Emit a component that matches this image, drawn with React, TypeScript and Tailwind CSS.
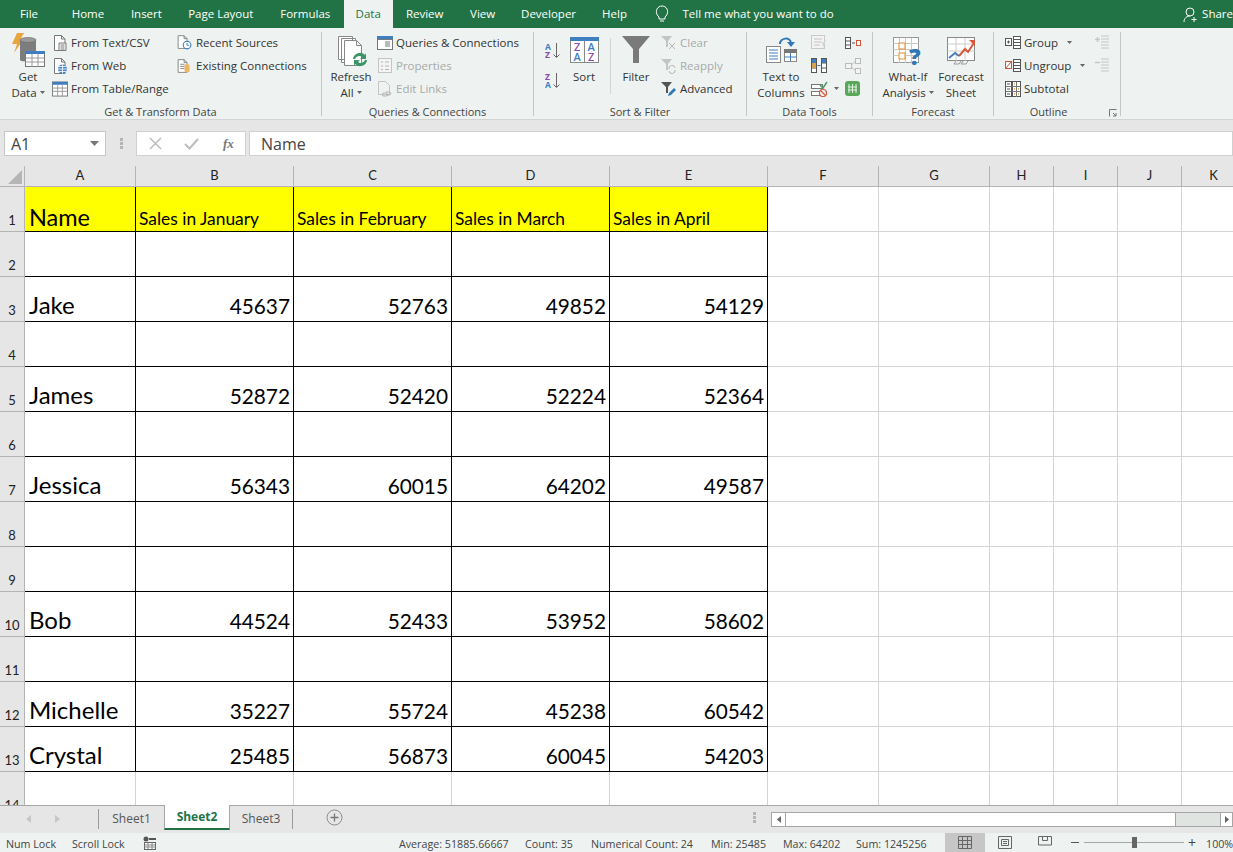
import React from "react";

const UI = "font-['Open_Sans','Noto_Sans',sans-serif]";
const CELL = "font-['Lato','Noto_Sans',sans-serif]";

const tabs = [
  { name: "File", w: "w-[58px]" },
  { name: "Home", w: "w-[60px]" },
  { name: "Insert", w: "w-[57px]" },
  { name: "Page Layout", w: "w-[92px]" },
  { name: "Formulas", w: "w-[77px]" },
  { name: "Data", w: "w-[49px]", active: true },
  { name: "Review", w: "w-[64px]" },
  { name: "View", w: "w-[52px]" },
  { name: "Developer", w: "w-[80px]" },
  { name: "Help", w: "w-[52px]" },
];

const Caret = () => (
  <svg width="5" height="3" viewBox="0 0 5 3" className="inline-block ml-[3px] mb-[2px]">
    <path d="M0 0h5L2.500 3z" fill="#666" />
  </svg>
);

const Doc = ({ c = "#777" }: { c?: string }) => (
  <path d="M2.500 .5h7l3.500 3.500v11.500h-10.500z M9.500 .5v3.500h3.500" fill="#fff" stroke={c} />
);

const FromText = () => (
  <svg width="16" height="16" viewBox="0 0 16 16">
    <Doc />
    <path d="M7 8h7v7.500h-7z" fill="#fff" stroke="#777" />
    <path d="M8.500 10h4M8.500 12h4M8.500 14h4" stroke="#777" />
  </svg>
);
const FromWeb = () => (
  <svg width="16" height="16" viewBox="0 0 16 16">
    <Doc />
    <circle cx="10.500" cy="11" r="4.500" fill="#4a86c8" />
    <path d="M6 11h9M10.500 6.500v9M7 8.500h7M7 13.500h7" stroke="#fff" strokeWidth=".8" />
  </svg>
);
const TableIcon = ({ w = 17, h = 16 }: { w?: number; h?: number }) => (
  <svg width={w} height={h} viewBox="0 0 17 16">
    <rect x=".5" y=".5" width="16" height="15" fill="#fff" stroke="#777" />
    <rect x=".5" y=".5" width="16" height="3" fill="#3f7fc1" />
    <path d="M.5 7h16M.5 10.500h16M6 4v12M11 4v12" stroke="#999" />
  </svg>
);
const Recent = () => (
  <svg width="20" height="17" viewBox="0 0 20 17">
    <Doc />
    <circle cx="13" cy="11.500" r="4.500" fill="#fff" stroke="#2f78b8" strokeWidth="1.200" />
    <path d="M13 9v2.800h2.500" fill="none" stroke="#2f78b8" />
  </svg>
);
const Existing = () => (
  <svg width="20" height="16" viewBox="0 0 20 16">
    <Doc />
    <path d="M5 6h5M5 8.500h5M5 11h5" stroke="#777" />
    <path d="M10 7.500c0-2 6-2 6 0v6.500c0 2-6 2-6 0z" fill="#eab765" />
  </svg>
);
const GetData = () => (
  <svg width="33" height="34" viewBox="0 0 33 34">
    <path d="M5 0h7L8 7h3L2 20l3-9H0z" fill="#e9a53d" />
    <path d="M8 7v20c0 2 16 2 16 0V7z" fill="#7d7d7d" />
    <ellipse cx="16" cy="7" rx="8" ry="2.500" fill="#9a9a9a" stroke="#666" strokeWidth=".6" />
    <rect x="13.500" y="18.500" width="19" height="15" fill="#fff" stroke="#777" />
    <rect x="13" y="18" width="20" height="3" fill="#3f7fc1" />
    <path d="M13.500 25h19M13.500 29h19M20 21v13M26 21v13" stroke="#999" />
  </svg>
);
const Refresh = () => (
  <svg width="31" height="31" viewBox="0 0 31 31">
    <path d="M1.500 .5h14v23h-14zM4.500 2.500h14v24h-14z" fill="#fff" stroke="#888" />
    <path d="M7.500 4.500h12l5 5v20h-17z M19.500 4.500v5h5" fill="#fff" stroke="#888" />
    <path d="M16 23a7 7 0 0 1 12-4l1-2v6h-6l2-2a4.500 4.500 0 0 0-7 2z" fill="#3c9468" />
    <path d="M30 24a7 7 0 0 1-12 4l-1 2v-6h6l-2 2a4.500 4.500 0 0 0 7-2z" fill="#3c9468" />
  </svg>
);
const Queries = () => (
  <svg width="16" height="14" viewBox="0 0 16 14">
    <rect x=".5" y=".5" width="15" height="13" fill="#fff" stroke="#777" />
    <rect x="0" y="0" width="16" height="3" fill="#3f7fc1" />
    <path d="M1 3.500h14M8 6h5M8 8h5M8 10h5" stroke="#777" />
  </svg>
);
const Properties = () => (
  <svg width="14" height="15" viewBox="0 0 14 15">
    <rect x=".5" y=".5" width="13" height="14" fill="#f4f4f4" stroke="#c4c4c4" />
    <path d="M3 4h2M7 4h4M3 8h2M7 8h4M3 11.500h2M7 11.500h4" stroke="#b5b5b5" />
  </svg>
);
const EditLinks = () => (
  <svg width="14" height="16" viewBox="0 0 14 16">
    <path d="M.5.5h7l4 4v9h-11z" fill="none" stroke="#c4c4c4" />
    <path d="M5 12h4a2 2 0 0 1 0 3H5a2 2 0 0 1 0-3zM8 11h4a2 2 0 0 1 0 3H8" fill="none" stroke="#b5b5b5" />
  </svg>
);
const AzIcon = ({ flip }: { flip?: boolean }) => (
  <svg width="16" height="17" viewBox="0 0 16 17">
    <text x="0" y="7.500" fontSize="8.500" fontWeight="700" fill={flip ? "#8a4bae" : "#3f7fc1"} fontFamily="Open Sans">{flip ? "Z" : "A"}</text>
    <text x="0" y="15.500" fontSize="8.500" fontWeight="700" fill={flip ? "#3f7fc1" : "#8a4bae"} fontFamily="Open Sans">{flip ? "A" : "Z"}</text>
    <path d="M11.500 1v14M8.500 12.500l3 3 3-3" fill="none" stroke="#666" />
  </svg>
);
const SortIcon = () => (
  <svg width="29" height="26" viewBox="0 0 29 26">
    <rect x=".5" y=".5" width="28" height="25" fill="#fff" stroke="#888" />
    <rect x="0" y="0" width="29" height="4" fill="#3f7fc1" />
    <path d="M14.500 4v22" stroke="#888" />
    <g fontFamily="Open Sans" fontSize="11" fontWeight="600">
      <text x="4" y="14" fill="#8a4bae">Z</text>
      <text x="3.500" y="24" fill="#3f7fc1">A</text>
      <text x="17.500" y="14" fill="#3f7fc1">A</text>
      <text x="18" y="24" fill="#8a4bae">Z</text>
    </g>
  </svg>
);
const Funnel = ({ c = "#7a7a7a" }: { c?: string }) => (
  <path d="M0 0h28L17 13v14h-6V13z" fill={c} />
);
const FilterIcon = () => (
  <svg width="28" height="27" viewBox="0 0 28 27"><Funnel /></svg>
);
const SmallFunnel = ({ children, c }: { children: React.ReactNode; c: string }) => (
  <svg width="16" height="16" viewBox="0 0 16 16">
    <path d="M0 1h11L7 6v6H5V6z" fill={c} />
    {children}
  </svg>
);
const TextCols = () => (
  <svg width="31" height="28" viewBox="0 0 31 28">
    <path d="M14 8C14 2 24 0 25 7" fill="none" stroke="#2f78b8" strokeWidth="2" />
    <path d="M21 6h8l-4 5z" fill="#2f78b8" />
    <rect x=".5" y="10.500" width="14" height="16" fill="#fff" stroke="#888" />
    <path d="M3 14h9M3 17h9M3 20h9M3 23h9" stroke="#3f7fc1" />
    <rect x="18.500" y="13.500" width="12" height="12" fill="#fff" stroke="#888" />
    <rect x="18" y="13" width="13" height="4" fill="#777" />
    <path d="M18.500 21h12M24.500 17v8" stroke="#3f7fc1" />
  </svg>
);
const Flash = () => (
  <svg width="16" height="15" viewBox="0 0 16 15">
    <rect x=".5" y=".5" width="13" height="13" fill="#f3f3f3" stroke="#c9c9c9" />
    <path d="M3 4h8M3 7h8M3 10h6" stroke="#c4c4c4" />
    <path d="M11 8l4-3-3 8z" fill="#d5d5d5" />
  </svg>
);
const ColSplit = ({ color }: { color: string }) => (
  <svg width="16" height="15" viewBox="0 0 16 15">
    <rect x=".5" y=".5" width="5" height="14" fill="#fff" stroke="#555" />
    <rect x="10.500" y=".5" width="5" height="14" fill="#fff" stroke="#555" />
    <path d="M.5 5h5M.5 10h5M10.500 5h5M10.500 10h5" stroke="#555" />
    <rect x="1" y="1" width="4" height="4" fill={color} />
    <rect x="1" y="5" width="4" height="5" fill="#d9a04d" />
    <rect x="11" y="1" width="4" height="4" fill={color} />
    <path d="M6.500 7.500h3" stroke="#2f78b8" />
  </svg>
);
const Validate = () => (
  <svg width="17" height="16" viewBox="0 0 17 16">
    <rect x=".5" y="3.500" width="11" height="4" fill="#fff" stroke="#777" />
    <rect x=".5" y="10.500" width="8" height="4" fill="#fff" stroke="#777" />
    <path d="M9 4l3 3 4-6" fill="none" stroke="#4b9b6a" strokeWidth="1.500" />
    <circle cx="12" cy="12" r="3.500" fill="#fff" stroke="#d4543a" strokeWidth="1.200" />
    <path d="M9.500 9.500l5 5" stroke="#d4543a" strokeWidth="1.200" />
  </svg>
);
const Consolidate = () => (
  <svg width="16" height="12" viewBox="0 0 16 12">
    <rect x=".5" y=".5" width="5" height="11" fill="#fff" stroke="#555" />
    <path d="M.5 4h5M.5 8h5M7 6h3" stroke="#555" />
    <rect x="11.500" y="3.500" width="4" height="5" fill="#fff" stroke="#d4543a" />
  </svg>
);
const Relations = () => (
  <svg width="16" height="16" viewBox="0 0 16 16">
    <rect x=".5" y="5.500" width="6" height="5" fill="#f4f4f4" stroke="#bbb" />
    <rect x="10.500" y=".5" width="5" height="5" fill="#f4f4f4" stroke="#bbb" />
    <rect x="10.500" y="10.500" width="5" height="5" fill="#f4f4f4" stroke="#bbb" />
    <path d="M6.500 7l4-4M6.500 9l4 4" stroke="#bbb" />
  </svg>
);
const Model = () => (
  <svg width="16" height="16" viewBox="0 0 16 16">
    <rect x="0" y="0" width="15" height="15" rx="3" fill="#5aa75c" />
    <path d="M4 3v9M7.500 3v9M11 3v9M3 6h9M3 9h9" stroke="#e4f2e4" />
  </svg>
);
const WhatIf = () => (
  <svg width="30" height="30" viewBox="0 0 30 30">
    <rect x=".5" y=".5" width="25" height="25" fill="#fff" stroke="#999" />
    <path d="M.5 6.500h25M.5 12.500h25M.5 18.500h25M6.500 1v25M12.500 1v25M18.500 1v25" stroke="#c9c9c9" />
    <rect x="6" y="6" width="6" height="6" fill="#fff" stroke="#e08a2e" />
    <rect x="6" y="16" width="6" height="6" fill="#fff" stroke="#e08a2e" />
    <text x="16" y="28" fontFamily="Open Sans" fontWeight="800" fontSize="23" fill="#2f78b8">?</text>
  </svg>
);
const Forecast = () => (
  <svg width="29" height="28" viewBox="0 0 29 28">
    <rect x=".5" y=".5" width="27" height="23" fill="#fff" stroke="#888" />
    <path d="M.5 7h27M.5 14h27M9 1v23M18 1v23" stroke="#ccc" />
    <path d="M2 21l6-5 4 3" fill="none" stroke="#3f7fc1" strokeWidth="2" />
    <path d="M12 19l6-7 3 3 6-9" fill="none" stroke="#d8583a" strokeWidth="2" />
    <path d="M22 3h6v6z" fill="#d8583a" />
    <path d="M9 24l-2 3h5l2-3M16 24l-2 3h5l2-3" fill="none" stroke="#999" />
  </svg>
);
const GroupIcon = ({ c = "#555", fill = "#fff", slash }: { c?: string; fill?: string; slash?: boolean }) => (
  <svg width="16" height="13" viewBox="0 0 16 13">
    <rect x=".5" y="2.500" width="6" height="7" fill={fill} stroke={c} />
    {slash ? <path d="M1 9l5-6" stroke={c} /> : <path d="M2 6h3M3.500 4.500v3" stroke="#555" />}
    <rect x="8.500" y=".5" width="7" height="12" fill="#fff" stroke="#555" />
    <path d="M8.500 3.500h7M8.500 6.500h7M8.500 9.500h7" stroke="#555" />
  </svg>
);
const SubtotalIcon = () => (
  <svg width="16" height="16" viewBox="0 0 16 16">
    <rect x=".5" y=".5" width="6" height="15" fill="#fff" stroke="#555" />
    <rect x="7.500" y=".5" width="8" height="15" fill="#fff" stroke="#555" />
    <path d="M.5 5.500h15M.5 10.500h15M11.500 1v15" stroke="#777" />
    <path d="M2 3h3M2 8h3M2 13h3" stroke="#555" />
    <path d="M9 3h1M9 8h1M13 8h1M9 13h1M13 13h1" stroke="#d9a04d" strokeWidth="1.500" />
  </svg>
);
const Detail = ({ plus }: { plus?: boolean }) => (
  <svg width="15" height="15" viewBox="0 0 15 15">
    <path d="M6 1h8M6 4h8M6 7h8M6 10h8M6 13h8" stroke="#c6c6c6" />
    <path d="M0 4.500h5" stroke="#c6c6c6" strokeWidth="1.500" />
    {plus && <path d="M2.500 2v5" stroke="#c6c6c6" strokeWidth="1.500" />}
  </svg>
);

const Small = ({ icon, label, off, iconW = "w-[16px]" }: { icon: React.ReactNode; label: string; off?: boolean; iconW?: string }) => (
  <div className={`flex items-center h-[23px] gap-[3px] whitespace-nowrap ${off ? "text-[#a9a9a9]" : "text-[#333]"}`}>
    <div className={`${iconW} flex justify-center shrink-0`}>{icon}</div>
    <span>{label}</span>
  </div>
);

const Big = ({ icon, lines, w, caret, topPad = "" }: { icon: React.ReactNode; lines: string[]; w: string; caret?: boolean; topPad?: string }) => (
  <div className={`${w} shrink-0 flex flex-col items-center leading-[16px] text-[#333] whitespace-nowrap`}>
    <div className={`h-[38px] flex items-start justify-center ${topPad}`}>{icon}</div>
    {lines.map((l, i) => (
      <div key={l}>
        {l}
        {caret && i === lines.length - 1 && <Caret />}
      </div>
    ))}
  </div>
);

const Group = ({ label, w, children, launcher }: { label: string; w: string; children: React.ReactNode; launcher?: boolean }) => (
  <div className={`${w} shrink-0 flex flex-col`}>
    <div className="h-[73px] flex">{children}</div>
    <div className={`h-[16px] flex items-center justify-center relative text-[11px] text-[#444] ${launcher ? "pr-[17px]" : ""}`}>
      {label}
      {launcher && (
        <svg width="8" height="8" viewBox="0 0 8 8" className="absolute right-[3px] top-[5px]">
          <path d="M.5 7.500v-7h7M4 4l3 3M7 4v3H4" fill="none" stroke="#777" />
        </svg>
      )}
    </div>
  </div>
);

const Sep = () => <div className="w-px h-[84px] mt-px bg-[#c6c6c6] shrink-0" />;

const Ribbon = () => (
  <div className={`h-[92px] bg-[#eef3f1] border-b border-[#d4d4d4] pt-[3px] flex items-start text-[11.500px] ${UI}`}>
    <Group label="Get & Transform Data" w="w-[321px]">
      <div className="flex pl-[8px]">
        <Big w="w-[40px]" icon={<GetData />} topPad="pt-[2px]" lines={["Get", "Data"]} caret />
        <div className="w-[124px] ml-[4px]">
          <Small icon={<FromText />} label="From Text/CSV" />
          <Small icon={<FromWeb />} label="From Web" />
          <Small icon={<TableIcon />} label="From Table/Range" />
        </div>
        <div>
          <Small icon={<Recent />} iconW="w-[17px]" label="Recent Sources" />
          <Small icon={<Existing />} iconW="w-[17px]" label="Existing Connections" />
        </div>
      </div>
    </Group>
    <Sep />
    <Group label="Queries & Connections" w="w-[211px]">
      <div className="flex pl-[7px]">
        <Big w="w-[44px]" icon={<Refresh />} topPad="pt-[5px] pl-[2px]" lines={["Refresh", "All"]} caret />
        <div className="ml-[4px]">
          <Small icon={<Queries />} label="Queries & Connections" />
          <Small icon={<Properties />} label="Properties" off />
          <Small icon={<EditLinks />} label="Edit Links" off />
        </div>
      </div>
    </Group>
    <Sep />
    <Group label="Sort & Filter" w="w-[212px]">
      <div className="flex pl-[11px]">
        <div className="w-[16px] pt-[11px] flex flex-col gap-[13px]">
          <AzIcon />
          <AzIcon flip />
        </div>
        <div className="ml-[6px] w-[34px]">
          <Big w="w-[34px]" icon={<SortIcon />} topPad="pt-[6px]" lines={["Sort"]} />
        </div>
        <div className="ml-[9px] mt-[7px] w-px h-[56px] bg-[#d4d4d4]" />
        <Big w="w-[30px] ml-[10px]" icon={<FilterIcon />} topPad="pt-[5px]" lines={["Filter"]} />
        <div className="ml-[10px]">
          <Small
            off
            label="Clear"
            icon={
              <SmallFunnel c="#c4c4c4">
                <path d="M8 8l6 6M14 8l-6 6" stroke="#b5b5b5" />
              </SmallFunnel>
            }
          />
          <Small
            off
            label="Reapply"
            icon={
              <SmallFunnel c="#c4c4c4">
                <path d="M8 11a3 3 0 0 1 6-1M14 12a3 3 0 0 1-6 1" fill="none" stroke="#b5b5b5" />
              </SmallFunnel>
            }
          />
          <Small
            label="Advanced"
            icon={
              <SmallFunnel c="#555">
                <path d="M7 15l1-3 5-5 2 2-5 5z" fill="#2f78b8" />
              </SmallFunnel>
            }
          />
        </div>
      </div>
    </Group>
    <Sep />
    <Group label="Data Tools" w="w-[125px]">
      <div className="flex pl-[9px]">
        <Big w="w-[50px]" icon={<TextCols />} topPad="pt-[5px]" lines={["Text to", "Columns"]} />
        <div className="ml-[5px] w-[34px] flex flex-col">
          <div className="h-[23px] flex items-center"><Flash /></div>
          <div className="h-[23px] flex items-center"><ColSplit color="#3f7fc1" /></div>
          <div className="h-[23px] flex items-center">
            <Validate />
            <span className="ml-[3px]"><Caret /></span>
          </div>
        </div>
        <div className="flex flex-col">
          <div className="h-[23px] flex items-center"><Consolidate /></div>
          <div className="h-[23px] flex items-center"><Relations /></div>
          <div className="h-[23px] flex items-center"><Model /></div>
        </div>
      </div>
    </Group>
    <Sep />
    <Group label="Forecast" w="w-[120px]">
      <div className="flex pl-[9px]">
        <Big w="w-[52px]" icon={<WhatIf />} topPad="pt-[6px]" lines={["What-If", "Analysis"]} caret />
        <Big w="w-[46px] ml-[4px]" icon={<Forecast />} topPad="pt-[6px]" lines={["Forecast", "Sheet"]} />
      </div>
    </Group>
    <Sep />
    <Group label="Outline" w="w-[126px]" launcher>
      <div className="flex pl-[11px]">
        <div className="w-[90px]">
          <div className="flex items-center">
            <Small icon={<GroupIcon />} label="Group" />
            <span className="ml-[6px]"><Caret /></span>
          </div>
          <div className="flex items-center">
            <Small icon={<GroupIcon c="#d4543a" fill="#fff" slash />} label="Ungroup" />
            <span className="ml-[6px]"><Caret /></span>
          </div>
          <Small icon={<SubtotalIcon />} label="Subtotal" />
        </div>
        <div className="flex flex-col gap-[8px] pt-[4px]">
          <Detail plus />
          <Detail />
        </div>
      </div>
    </Group>
    <Sep />
  </div>
);

const FormulaBar = () => (
  <div className={`h-[46px] bg-[#e6e6e6] pt-[11px] flex items-start ${UI}`}>
    <div className="ml-[4px] w-[102px] h-[25px] bg-white border border-[#c6c6c6] flex items-center justify-between px-[6px] text-[16px] text-[#444]">
      <span>A1</span>
      <svg width="9" height="5" viewBox="0 0 9 5"><path d="M0 0h9L4.500 5z" fill="#777" /></svg>
    </div>
    <div className="w-[30px] h-[25px] flex items-center justify-center">
      <svg width="3" height="11" viewBox="0 0 3 11"><path d="M0 0h3v3H0zM0 4h3v3H0zM0 8h3v3H0z" fill="#b5b5b5" /></svg>
    </div>
    <div className="w-[110px] h-[25px] bg-white border border-[#d0d0d0] flex items-center pl-[12px] gap-[22px]">
      <svg width="13" height="13" viewBox="0 0 13 13"><path d="M1 1l11 11M12 1L1 12" stroke="#bdbdbd" strokeWidth="1.500" /></svg>
      <svg width="15" height="12" viewBox="0 0 15 12"><path d="M1 6l4.500 4.500L14 1" fill="none" stroke="#bdbdbd" strokeWidth="2" /></svg>
      <span className="font-['Liberation_Serif',serif] italic font-bold text-[13px] text-[#777] ml-[2px]">fx</span>
    </div>
    <div className="ml-[3px] flex-1 h-[25px] bg-white border border-[#d0d0d0] flex items-center pl-[11px] text-[16px] text-[#444]">
      Name
    </div>
  </div>
);

const cols = ["A", "B", "C", "D", "E", "F", "G", "H", "I", "J", "K"];

const rows: (null | { name: string; vals: number[] })[] = [
  null,
  null,
  { name: "Jake", vals: [45637, 52763, 49852, 54129] },
  null,
  { name: "James", vals: [52872, 52420, 52224, 52364] },
  null,
  { name: "Jessica", vals: [56343, 60015, 64202, 49587] },
  null,
  null,
  { name: "Bob", vals: [44524, 52433, 53952, 58602] },
  null,
  { name: "Michelle", vals: [35227, 55724, 45238, 60542] },
  { name: "Crystal", vals: [25485, 56873, 60045, 54203] },
];

const heads = ["Sales in January", "Sales in February", "Sales in March", "Sales in April"];

const RowNum = ({ n }: { n: number }) => (
  <div className="h-[45px] bg-[#e6e6e6] border-r border-b border-[#b4b4b4] flex items-end justify-center pb-[3px] text-[13px] leading-[16px] text-[#222]">
    {n}
  </div>
);

const Blank = () => <div className="h-[45px] bg-white border-r border-b border-[#d4d4d4]" />;

const Sheet = () => (
  <div className={`h-[639px] overflow-hidden bg-white grid grid-cols-[25px_111px_158px_158px_158px_158px_111px_111px_64px_64px_64px_64px] auto-rows-min ${CELL}`}>
    <div className="h-[21px] bg-[#e6e6e6] border-r border-b border-[#b4b4b4] flex items-end justify-end pr-[2px] pb-[2px]">
      <svg width="14" height="14" viewBox="0 0 14 14"><path d="M14 0v14H0z" fill="#b5b5b5" /></svg>
    </div>
    {cols.map((c) => (
      <div key={c} className="h-[21px] bg-[#e6e6e6] border-r border-b border-[#b4b4b4] flex items-center justify-center text-[13px] text-[#222]">
        {c}
      </div>
    ))}

    <RowNum n={1} />
    <div className="h-[45px] bg-[#ffff00] border-r border-b border-black flex items-end pl-[4px] pb-[1px] text-[23.500px] leading-[26px] text-black">Name</div>
    {heads.map((h) => (
      <div key={h} className="h-[45px] bg-[#ffff00] border-r border-b border-black flex items-end pl-[3px] pb-[1px] text-[17.400px] leading-[23px] text-black whitespace-nowrap">
        {h}
      </div>
    ))}
    {[0, 1, 2, 3, 4, 5].map((i) => <Blank key={i} />)}

    {rows.slice(1).map((r, i) => (
      <React.Fragment key={i}>
        <RowNum n={i + 2} />
        <div className="h-[45px] border-r border-b border-black flex items-end pl-[4px] pb-[1px] text-[24px] leading-[30px] text-black whitespace-nowrap">
          {r?.name}
        </div>
        {[0, 1, 2, 3].map((j) => (
          <div key={j} className="h-[45px] border-r border-b border-black flex items-end justify-end pr-[3px] pb-[1px] text-[20.800px] leading-[28px] text-black">
            {r?.vals[j]}
          </div>
        ))}
        {[0, 1, 2, 3, 4, 5].map((k) => <Blank key={k} />)}
      </React.Fragment>
    ))}

    <RowNum n={14} />
    {cols.map((c) => <div key={c} className="h-[45px] border-r border-[#d4d4d4]" />)}
  </div>
);

const SheetTabs = () => (
  <div className={`h-[28px] bg-[#e6e6e6] border-t border-[#a6a6a6] flex items-start text-[12px] text-[#555] ${UI}`}>
    <div className="w-[99px] h-[20px] mt-[3px] flex items-center pl-[26px] gap-[24px] border-r border-[#9a9a9a]">
      <svg width="5" height="8" viewBox="0 0 5 8"><path d="M5 0v8L0 4z" fill="#c6c6c6" /></svg>
      <svg width="5" height="8" viewBox="0 0 5 8"><path d="M0 0v8l5-4z" fill="#c6c6c6" /></svg>
    </div>
    <div className="w-[65px] h-[25px] flex items-center justify-center">Sheet1</div>
    <div className="w-[66px] h-[25px] -mt-px bg-white border-x border-[#a6a6a6] border-b-2 border-b-[#217346] flex items-center justify-center font-bold text-[#217346]">
      Sheet2
    </div>
    <div className="w-[63px] h-[20px] mt-[3px] flex items-center justify-center border-r border-[#9a9a9a]">Sheet3</div>
    <div className="ml-[33px] mt-[3px]">
      <svg width="17" height="17" viewBox="0 0 17 17">
        <circle cx="8.500" cy="8.500" r="7.500" fill="none" stroke="#8a8a8a" />
        <path d="M4.500 8.500h8M8.500 4.500v8" stroke="#777" strokeWidth="1.300" />
      </svg>
    </div>
    <div className="ml-[410px] mt-[6px]">
      <svg width="3" height="11" viewBox="0 0 3 11"><path d="M0 0h3v3H0zM0 4h3v3H0zM0 8h3v3H0z" fill="#b5b5b5" /></svg>
    </div>
    <div className="ml-[15px] mt-[6px] flex-1 h-[15px] flex border border-[#a6a6a6] bg-white">
      <div className="w-[14px] border-r border-[#a6a6a6] flex items-center justify-center">
        <svg width="4" height="7" viewBox="0 0 4 7"><path d="M4 0v7L0 3.500z" fill="#666" /></svg>
      </div>
      <div className="flex-1" />
      <div className="w-[45px] bg-[#dfe4e1] border-l border-[#a6a6a6]" />
      <div className="w-[12px] border-l border-[#a6a6a6] flex items-center justify-center">
        <svg width="4" height="7" viewBox="0 0 4 7"><path d="M0 0v7l4-3.500z" fill="#666" /></svg>
      </div>
    </div>
  </div>
);

const StatusBar = () => (
  <div className={`h-[19px] bg-[#eef3f1] flex items-center text-[10.700px] text-[#444] whitespace-nowrap ${UI}`}>
    <span className="w-[72px] shrink-0 pl-[6px] pt-[4px]">Num Lock</span>
    <span className="w-[71px] shrink-0 pt-[4px]">Scroll Lock</span>
    <svg width="13" height="14" viewBox="0 0 13 14" className="shrink-0">
      <circle cx="3" cy="3" r="2.500" fill="#555" />
      <path d="M6 2h7v2H6z" fill="#555" />
      <rect x="1.500" y="6.500" width="11" height="7" fill="#fff" stroke="#666" />
      <path d="M1.500 9h11M1.500 11h11M5 7v6M9 7v6" stroke="#888" />
    </svg>
    <div className="ml-[243px] flex w-[546px] shrink-0 pt-[4px]">
      <span className="w-[126px]">Average: 51885.66667</span>
      <span className="w-[66px]">Count: 35</span>
      <span className="w-[120px]">Numerical Count: 24</span>
      <span className="w-[72px]">Min: 25485</span>
      <span className="w-[73px]">Max: 64202</span>
      <span>Sum: 1245256</span>
    </div>
    <div className="w-[40px] h-[19px] shrink-0 bg-[#c6c6c6] flex items-center justify-center">
      <svg width="14" height="13" viewBox="0 0 14 13"><path d="M.5.500h13v12H.5zM.5 4.500h13M.5 8.500h13M4.500.5v12M9.500.5v12" fill="none" stroke="#666" /></svg>
    </div>
    <div className="w-[40px] shrink-0 flex justify-center">
      <svg width="14" height="13" viewBox="0 0 14 13"><path d="M.5.500h13v12H.5z" fill="none" stroke="#666" /><path d="M3.500 3.500h7v6h-7zM5 5.500h4M5 7.500h4" fill="none" stroke="#666" /></svg>
    </div>
    <div className="w-[40px] shrink-0 flex justify-center">
      <svg width="14" height="13" viewBox="0 0 14 13"><path d="M.5 9V.5h13V9M.5 9h13M4.500.5v4M9.500.5v4M4.500 4.500h5" fill="none" stroke="#666" /></svg>
    </div>
    <div className="ml-[6px] w-[8px] h-px bg-[#555] shrink-0" />
    <div className="ml-[5px] w-[100px] h-px bg-[#a6a6a6] flex items-center justify-center shrink-0">
      <div className="w-[5px] h-[11px] bg-[#666] shrink-0" />
    </div>
    <span className="ml-[4px] shrink-0 text-[14px] leading-none">+</span>
    <span className="ml-[10px] shrink-0 pt-[4px]">100%</span>
  </div>
);

export default function App() {
  return (
    <div className="w-[1233px] h-[852px] overflow-hidden flex flex-col">
      <div className={`h-[28px] bg-[#217346] flex items-stretch text-[11.500px] text-white whitespace-nowrap ${UI}`}>
        {tabs.map((t) => (
          <div key={t.name} className={`${t.w} flex items-center justify-center ${t.active ? "bg-[#eef3f1] text-[#217346]" : ""}`}>
            {t.name}
          </div>
        ))}
        <div className="ml-[15px] flex items-center w-[27px]">
          <svg width="14" height="18" viewBox="0 0 14 18">
            <path d="M4 12C1 9.500 1 6 2 4c2-4 8-4 10 0 1 2 1 5.500-2 8v2H4z M5 16h4" fill="none" stroke="#fff" />
          </svg>
        </div>
        <div className="flex items-center w-[501px]">Tell me what you want to do</div>
        <div className="flex items-center gap-[3px]">
          <svg width="16" height="17" viewBox="0 0 16 17">
            <circle cx="7" cy="6" r="4" fill="none" stroke="#fff" />
            <path d="M1 16c0-4 3-6 6-6M11 11v5M8.500 13.500h5" fill="none" stroke="#fff" />
          </svg>
          <span>Share</span>
        </div>
      </div>
      <Ribbon />
      <FormulaBar />
      <Sheet />
      <SheetTabs />
      <StatusBar />
    </div>
  );
}
